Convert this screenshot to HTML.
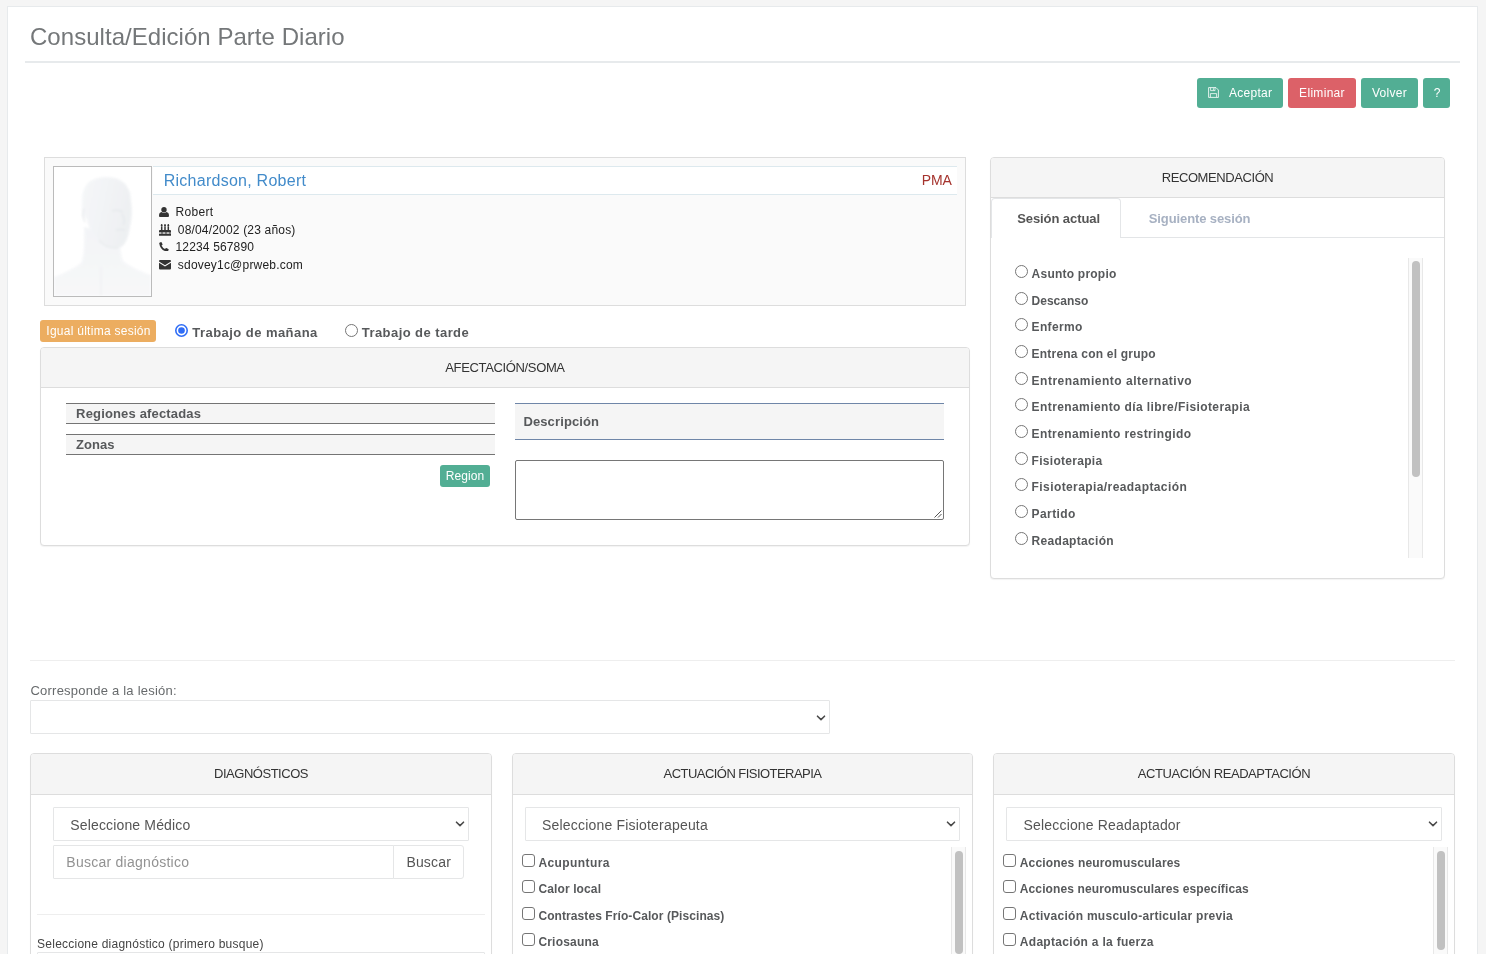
<!DOCTYPE html>
<html lang="es"><head><meta charset="utf-8"><title>Consulta/Edición Parte Diario</title>
<style>
html,body{margin:0;padding:0}
body{width:1486px;height:954px;overflow:hidden;background:#f5f5f5;font-family:"Liberation Sans", sans-serif;position:relative}
#pg{position:absolute;left:0;top:0;width:1486px;height:954px;overflow:hidden;will-change:transform}
#pg div,#pg svg{position:absolute;box-sizing:border-box}
.t{position:absolute;line-height:1;white-space:pre;font-family:"Liberation Sans", sans-serif}

.rd{border:1px solid #767676;border-radius:50%;background:#fff}
.cb{border:1px solid #767676;border-radius:3px;background:#fff}
.ph{background:#f5f5f5;border-bottom:1px solid #ddd;border-radius:3px 3px 0 0}
.pn{background:#fff;border:1px solid #ddd;border-radius:4px;box-shadow:0 1px 1px rgba(0,0,0,.05)}
.btn{border-radius:3px}
.sel{background:#fff;border:1px solid #e5e6e7;border-radius:1px}
.trk{background:#fafafa;border-left:1px solid #e8e8e8;border-right:1px solid #e8e8e8}
.thb{background:#c1c1c1;border-radius:4px}

</style></head><body><div id="pg">
<div style="left:7px;top:6px;width:1471px;height:960px;background:#fff;border:1px solid #e7eaec"></div>
<div style="left:25px;top:61px;width:1435px;height:2px;background:#e7eaec"></div>
<div class="btn" style="left:1197px;top:78px;width:86px;height:30px;background:#52ae94"></div>
<div class="btn" style="left:1288px;top:78px;width:68px;height:30px;background:#dc6168"></div>
<div class="btn" style="left:1361px;top:78px;width:57px;height:30px;background:#52ae94"></div>
<div class="btn" style="left:1423px;top:78px;width:27px;height:30px;background:#52ae94"></div>
<svg style="left:1208px;top:87px" width="11" height="11" viewBox="0 0 11 11"><path d="M0.6 0.6 H8 L10.4 3 V10.4 H0.6 Z" fill="none" stroke="#fff" stroke-width="0.9" stroke-linejoin="round" opacity="0.92"/><path d="M2.6 0.8 V3.6 H7 V0.8 M5.4 1.2 V3.2 M2.4 10.2 V6.6 H8.6 V10.2" fill="none" stroke="#fff" stroke-width="0.9" opacity="0.85"/></svg>
<div style="left:44px;top:157px;width:922px;height:149px;background:#fafafa;border:1px solid #ddd"></div>
<div style="left:153px;top:166px;width:804px;height:29px;background:#fff;border-top:1px solid #dde9ee;border-bottom:1px solid #dde9ee"></div>
<div style="left:53px;top:166px;width:99px;height:131px;background:#fff;border:1px solid #bbb"></div>
<svg style="left:54px;top:167px" width="97" height="129" viewBox="0 0 97 129"><defs><filter id="bl" x="-10%" y="-10%" width="120%" height="120%"><feGaussianBlur stdDeviation="1.1"/></filter><linearGradient id="hg" x1="0" y1="0" x2="1" y2="0.3"><stop offset="0" stop-color="#f3f5f7"/><stop offset="0.6" stop-color="#eef0f3"/><stop offset="1" stop-color="#e9ecef"/></linearGradient><linearGradient id="bg2" x1="0" y1="0" x2="0" y2="1"><stop offset="0" stop-color="#f0f2f5"/><stop offset="1" stop-color="#f5f6f8"/></linearGradient></defs><g filter="url(#bl)" opacity="0.78"><path d="M0 110 Q18 103 27 96 Q31 88 30 60 L66 70 Q66 90 70 95 Q84 104 97 108 V129 H0Z" fill="url(#bg2)"/><path d="M28 36 Q27 10 52 10 Q76 10 77 34 Q79 48 76 60 Q73 80 64 81 Q55 82 42 70 Q34 62 33 52 Q27 50 28 36Z" fill="url(#hg)"/><path d="M58 44 Q64 42 69 45 M62 63 Q67 62 71 63 M68 47 Q72 54 69 58" stroke="#dfe3e7" stroke-width="1.6" fill="none"/><path d="M30 42 Q27 47 31 55 M45 73 Q52 82 64 81" stroke="#e4e7ea" stroke-width="1.5" fill="none"/><path d="M47 100 V129" stroke="#eceef1" stroke-width="1.5" fill="none"/></g></svg>
<svg style="left:159.2px;top:206.5px" width="10" height="10.4" viewBox="0 0 10 10.4"><circle cx="5" cy="2.7" r="2.7" fill="#333"/><path d="M0 8.6 Q0 5.4 2.6 5 Q5 6.8 7.4 5 Q10 5.4 10 8.6 Q10 10.4 8.4 10.4 H1.6 Q0 10.4 0 8.6Z" fill="#333"/></svg>
<svg style="left:159.2px;top:224px" width="12" height="11.8" viewBox="0 0 12 11.8"><g fill="#333"><ellipse cx="2.7" cy="1.2" rx="0.85" ry="1.2"/><ellipse cx="6" cy="1.2" rx="0.85" ry="1.2"/><ellipse cx="9.3" cy="1.2" rx="0.85" ry="1.2"/><rect x="1.95" y="2.4" width="1.5" height="4"/><rect x="5.25" y="2.4" width="1.5" height="4"/><rect x="8.55" y="2.4" width="1.5" height="4"/><path d="M0.9 6.1 H11.1 Q12 6.1 12 7 V8.5 Q11 9.1 10 8.5 T8 8.5 T6 8.5 T4 8.5 T2 8.5 T0 8.5 V7 Q0 6.1 0.9 6.1Z"/><path d="M0 9.5 Q1 10.1 2 9.5 T4 9.5 T6 9.5 T8 9.5 T10 9.5 T12 9.5 V11.8 H0Z"/></g></svg>
<svg style="left:159.2px;top:241.7px" width="9.8" height="9.6" viewBox="0 0 9.8 9.6"><path d="M0.2 1.3 Q0.1 0.9 0.5 0.7 L2 0.05 Q2.5 -0.1 2.7 0.4 L3.5 2.2 Q3.7 2.6 3.3 2.9 L2.5 3.6 Q3.6 6 6 7.1 L6.7 6.3 Q7 5.9 7.4 6.1 L9.3 6.9 Q9.8 7.1 9.7 7.6 L9.1 9.1 Q8.9 9.5 8.5 9.5 Q1.4 9 0.2 1.3Z" fill="#333"/></svg>
<svg style="left:159.2px;top:260.4px" width="12" height="9.4" viewBox="0 0 12 9.4"><path d="M0 1 Q0 0 1 0 H11 Q12 0 12 1 V1.5 L6 5.3 L0 1.5Z M0 2.8 L6 6.6 L12 2.8 V8.4 Q12 9.4 11 9.4 H1 Q0 9.4 0 8.4Z" fill="#333"/></svg>
<div class="btn" style="left:40px;top:320px;width:116px;height:22px;background:#ecad60"></div>
<svg style="left:175px;top:324.4px" width="13" height="13" viewBox="0 0 13 13"><circle cx="6.5" cy="6.5" r="5.7" fill="#fff" stroke="#2f6df6" stroke-width="1.6"/><circle cx="6.5" cy="6.5" r="3.3" fill="#2f6df6"/></svg>
<div class="rd" style="left:345px;top:324.4px;width:13px;height:13px;"></div>
<div class="pn" style="left:40px;top:347px;width:930px;height:199px;"></div>
<div class="ph" style="left:41px;top:348px;width:928px;height:40px;"></div>
<div style="left:66px;top:403px;width:429px;height:21px;background:#f5f5f5;border-top:1px solid #747474;border-bottom:1px solid #747474"></div>
<div style="left:66px;top:434px;width:429px;height:21px;background:#f5f5f5;border-top:1px solid #747474;border-bottom:1px solid #747474"></div>
<div style="left:515px;top:403px;width:429px;height:37px;background:#f5f5f5;border-top:1px solid #6f86a8;border-bottom:1px solid #6f86a8"></div>
<div class="btn" style="left:440px;top:465px;width:50px;height:22px;background:#52ae94"></div>
<div style="left:515px;top:460px;width:429px;height:60px;background:#fff;border:1px solid #767676;border-radius:2px"></div>
<svg style="left:934px;top:510px" width="8" height="8" viewBox="0 0 8 8"><path d="M7.5 0.5 L0.5 7.5 M7.5 4 L4 7.5" stroke="#555" stroke-width="1" fill="none"/></svg>
<div class="pn" style="left:990px;top:157px;width:455px;height:422px;"></div>
<div class="ph" style="left:991px;top:158px;width:453px;height:40px;"></div>
<div style="left:1120px;top:237px;width:324px;height:1px;background:#e3e5e7"></div>
<div style="left:991px;top:198px;width:130px;height:40px;border:1px solid #e4e6e8;border-bottom:none;border-radius:4px 4px 0 0;background:#fff"></div>
<div class="rd" style="left:1015px;top:265px;width:13px;height:13px;"></div>
<div class="rd" style="left:1015px;top:292px;width:13px;height:13px;"></div>
<div class="rd" style="left:1015px;top:318px;width:13px;height:13px;"></div>
<div class="rd" style="left:1015px;top:345px;width:13px;height:13px;"></div>
<div class="rd" style="left:1015px;top:372px;width:13px;height:13px;"></div>
<div class="rd" style="left:1015px;top:398px;width:13px;height:13px;"></div>
<div class="rd" style="left:1015px;top:425px;width:13px;height:13px;"></div>
<div class="rd" style="left:1015px;top:452px;width:13px;height:13px;"></div>
<div class="rd" style="left:1015px;top:478px;width:13px;height:13px;"></div>
<div class="rd" style="left:1015px;top:505px;width:13px;height:13px;"></div>
<div class="rd" style="left:1015px;top:532px;width:13px;height:13px;"></div>
<div class="trk" style="left:1408px;top:258px;width:15px;height:300px;"></div>
<div class="thb" style="left:1412px;top:260.5px;width:8px;height:216px;"></div>
<div style="left:30px;top:660px;width:1425px;height:1px;background:#eee"></div>
<div class="sel" style="left:30px;top:700px;width:800px;height:34px;"></div>
<svg style="left:816px;top:713.5px" width="10" height="8" viewBox="0 0 10 8"><path d="M1.5 2.2 L5 5.6 L8.5 2.2" fill="none" stroke="#4a4a4a" stroke-width="1.6" stroke-linecap="round" stroke-linejoin="round"/></svg>
<div class="pn" style="left:30px;top:753px;width:462px;height:230px;"></div>
<div class="ph" style="left:31px;top:754px;width:460px;height:41px;"></div>
<div class="pn" style="left:512px;top:753px;width:461px;height:230px;"></div>
<div class="ph" style="left:513px;top:754px;width:459px;height:41px;"></div>
<div class="pn" style="left:993px;top:753px;width:462px;height:230px;"></div>
<div class="ph" style="left:994px;top:754px;width:460px;height:41px;"></div>
<div class="sel" style="left:53px;top:807px;width:416px;height:34px;"></div>
<svg style="left:454.7px;top:820px" width="10" height="8" viewBox="0 0 10 8"><path d="M1.5 2.2 L5 5.6 L8.5 2.2" fill="none" stroke="#4a4a4a" stroke-width="1.6" stroke-linecap="round" stroke-linejoin="round"/></svg>
<div class="sel" style="left:525px;top:807px;width:435px;height:34px;"></div>
<svg style="left:945.8px;top:820px" width="10" height="8" viewBox="0 0 10 8"><path d="M1.5 2.2 L5 5.6 L8.5 2.2" fill="none" stroke="#4a4a4a" stroke-width="1.6" stroke-linecap="round" stroke-linejoin="round"/></svg>
<div class="sel" style="left:1006px;top:807px;width:436px;height:34px;"></div>
<svg style="left:1427.6px;top:820px" width="10" height="8" viewBox="0 0 10 8"><path d="M1.5 2.2 L5 5.6 L8.5 2.2" fill="none" stroke="#4a4a4a" stroke-width="1.6" stroke-linecap="round" stroke-linejoin="round"/></svg>
<div class="sel" style="left:53px;top:845px;width:341px;height:34px;"></div>
<div style="left:393px;top:845px;width:71px;height:34px;background:#fff;border:1px solid #e5e6e7;border-radius:0 3px 3px 0"></div>
<div style="left:37px;top:914px;width:448px;height:1px;background:#eee"></div>
<div class="sel" style="left:37px;top:952px;width:448px;height:34px;"></div>
<div class="cb" style="left:522px;top:854px;width:13px;height:13px;"></div>
<div class="cb" style="left:1003px;top:854px;width:13px;height:13px;"></div>
<div class="cb" style="left:522px;top:880px;width:13px;height:13px;"></div>
<div class="cb" style="left:1003px;top:880px;width:13px;height:13px;"></div>
<div class="cb" style="left:522px;top:907px;width:13px;height:13px;"></div>
<div class="cb" style="left:1003px;top:907px;width:13px;height:13px;"></div>
<div class="cb" style="left:522px;top:933px;width:13px;height:13px;"></div>
<div class="cb" style="left:1003px;top:933px;width:13px;height:13px;"></div>
<div class="trk" style="left:951px;top:847px;width:15px;height:120px;"></div>
<div class="thb" style="left:955px;top:850.5px;width:8px;height:103px;"></div>
<div class="trk" style="left:1433px;top:847px;width:15px;height:120px;"></div>
<div class="thb" style="left:1437px;top:850.5px;width:8px;height:99.5px;"></div>
<span class="t " style="left:30.00px;top:25.40px;font-size:24px;color:#747779;letter-spacing:0.037px">Consulta/Edición Parte Diario</span>
<span class="t " style="left:1229.00px;top:86.60px;font-size:12px;color:#fff;letter-spacing:0.272px">Aceptar</span>
<span class="t " style="left:1299.10px;top:86.60px;font-size:12px;color:#fff;letter-spacing:0.307px">Eliminar</span>
<span class="t " style="left:1371.88px;top:86.60px;font-size:12px;color:#fff;letter-spacing:0.281px">Volver</span>
<span class="t " style="left:1433.81px;top:86.60px;font-size:12px;color:#fff;letter-spacing:-1.500px">?</span>
<span class="t " style="left:163.70px;top:173.00px;font-size:16px;color:#428bca;letter-spacing:0.258px">Richardson, Robert</span>
<span class="t " style="left:921.73px;top:173.00px;font-size:14px;color:#a5332d;letter-spacing:-0.156px">PMA</span>
<span class="t " style="left:175.50px;top:205.90px;font-size:12px;color:#222;letter-spacing:0.310px">Robert</span>
<span class="t " style="left:177.80px;top:223.50px;font-size:12px;color:#222;letter-spacing:0.180px">08/04/2002 (23 años)</span>
<span class="t " style="left:175.50px;top:241.00px;font-size:12px;color:#222;letter-spacing:0.154px">12234 567890</span>
<span class="t " style="left:177.80px;top:258.50px;font-size:12px;color:#222;letter-spacing:0.204px">sdovey1c@prweb.com</span>
<span class="t " style="left:46.30px;top:325.40px;font-size:12px;color:#fff;letter-spacing:0.265px">Igual última sesión</span>
<span class="t " style="left:192.30px;top:326.00px;font-size:13px;font-weight:700;color:#57595b;letter-spacing:0.452px">Trabajo de mañana</span>
<span class="t " style="left:361.80px;top:326.00px;font-size:13px;font-weight:700;color:#57595b;letter-spacing:0.434px">Trabajo de tarde</span>
<span class="t " style="left:445.31px;top:360.60px;font-size:13px;color:#333;letter-spacing:-0.356px">AFECTACIÓN/SOMA</span>
<span class="t " style="left:76.10px;top:407.00px;font-size:13px;font-weight:700;color:#57595b;letter-spacing:0.160px">Regiones afectadas</span>
<span class="t " style="left:76.10px;top:437.80px;font-size:13px;font-weight:700;color:#57595b;letter-spacing:0.028px">Zonas</span>
<span class="t " style="left:523.40px;top:414.80px;font-size:13px;font-weight:700;color:#57595b;letter-spacing:0.125px">Descripción</span>
<span class="t " style="left:445.86px;top:470.40px;font-size:12px;color:#fff;letter-spacing:0.042px">Region</span>
<span class="t " style="left:1161.69px;top:170.60px;font-size:13px;color:#333;letter-spacing:-0.415px">RECOMENDACIÓN</span>
<span class="t " style="left:1017.20px;top:212.00px;font-size:13px;font-weight:700;color:#555;letter-spacing:-0.083px">Sesión actual</span>
<span class="t " style="left:1148.80px;top:212.00px;font-size:13px;font-weight:700;color:#a7b1c2;letter-spacing:-0.107px">Siguiente sesión</span>
<span class="t " style="left:1031.60px;top:268.00px;font-size:12px;font-weight:700;color:#57595b;letter-spacing:0.227px">Asunto propio</span>
<span class="t " style="left:1031.60px;top:295.00px;font-size:12px;font-weight:700;color:#57595b;letter-spacing:-0.008px">Descanso</span>
<span class="t " style="left:1031.60px;top:321.00px;font-size:12px;font-weight:700;color:#57595b;letter-spacing:0.333px">Enfermo</span>
<span class="t " style="left:1031.60px;top:348.00px;font-size:12px;font-weight:700;color:#57595b;letter-spacing:0.210px">Entrena con el grupo</span>
<span class="t " style="left:1031.60px;top:375.00px;font-size:12px;font-weight:700;color:#57595b;letter-spacing:0.502px">Entrenamiento alternativo</span>
<span class="t " style="left:1031.60px;top:401.00px;font-size:12px;font-weight:700;color:#57595b;letter-spacing:0.402px">Entrenamiento día libre/Fisioterapia</span>
<span class="t " style="left:1031.60px;top:428.00px;font-size:12px;font-weight:700;color:#57595b;letter-spacing:0.393px">Entrenamiento restringido</span>
<span class="t " style="left:1031.60px;top:455.00px;font-size:12px;font-weight:700;color:#57595b;letter-spacing:0.288px">Fisioterapia</span>
<span class="t " style="left:1031.60px;top:481.00px;font-size:12px;font-weight:700;color:#57595b;letter-spacing:0.408px">Fisioterapia/readaptación</span>
<span class="t " style="left:1031.60px;top:508.00px;font-size:12px;font-weight:700;color:#57595b;letter-spacing:0.400px">Partido</span>
<span class="t " style="left:1031.60px;top:535.00px;font-size:12px;font-weight:700;color:#57595b;letter-spacing:0.302px">Readaptación</span>
<span class="t " style="left:30.50px;top:684.20px;font-size:13px;color:#676a6c;letter-spacing:0.223px">Corresponde a la lesión:</span>
<span class="t " style="left:214.01px;top:767.00px;font-size:13px;color:#333;letter-spacing:-0.475px">DIAGNÓSTICOS</span>
<span class="t " style="left:663.56px;top:767.00px;font-size:13px;color:#333;letter-spacing:-0.540px">ACTUACIÓN FISIOTERAPIA</span>
<span class="t " style="left:1137.80px;top:767.00px;font-size:13px;color:#333;letter-spacing:-0.426px">ACTUACIÓN READAPTACIÓN</span>
<span class="t " style="left:70.30px;top:818.00px;font-size:14px;color:#555;letter-spacing:0.151px">Seleccione Médico</span>
<span class="t " style="left:542.00px;top:818.00px;font-size:14px;color:#555;letter-spacing:0.193px">Seleccione Fisioterapeuta</span>
<span class="t " style="left:1023.60px;top:818.00px;font-size:14px;color:#555;letter-spacing:0.169px">Seleccione Readaptador</span>
<span class="t " style="left:66.30px;top:854.80px;font-size:14px;color:#929292;letter-spacing:0.260px">Buscar diagnóstico</span>
<span class="t " style="left:406.44px;top:854.80px;font-size:14px;color:#555;letter-spacing:0.156px">Buscar</span>
<span class="t " style="left:37.10px;top:937.50px;font-size:12px;color:#444;letter-spacing:0.234px">Seleccione diagnóstico (primero busque)</span>
<span class="t " style="left:538.40px;top:857.00px;font-size:12px;font-weight:700;color:#57595b;letter-spacing:0.416px">Acupuntura</span>
<span class="t " style="left:1019.80px;top:857.00px;font-size:12px;font-weight:700;color:#57595b;letter-spacing:0.162px">Acciones neuromusculares</span>
<span class="t " style="left:538.40px;top:883.00px;font-size:12px;font-weight:700;color:#57595b;letter-spacing:0.125px">Calor local</span>
<span class="t " style="left:1019.80px;top:883.00px;font-size:12px;font-weight:700;color:#57595b;letter-spacing:0.117px">Acciones neuromusculares específicas</span>
<span class="t " style="left:538.40px;top:910.00px;font-size:12px;font-weight:700;color:#57595b;letter-spacing:0.082px">Contrastes Frío-Calor (Piscinas)</span>
<span class="t " style="left:1019.80px;top:910.00px;font-size:12px;font-weight:700;color:#57595b;letter-spacing:0.282px">Activación musculo-articular previa</span>
<span class="t " style="left:538.40px;top:936.00px;font-size:12px;font-weight:700;color:#57595b;letter-spacing:0.193px">Criosauna</span>
<span class="t " style="left:1019.80px;top:936.00px;font-size:12px;font-weight:700;color:#57595b;letter-spacing:0.302px">Adaptación a la fuerza</span>
</div></body></html>
